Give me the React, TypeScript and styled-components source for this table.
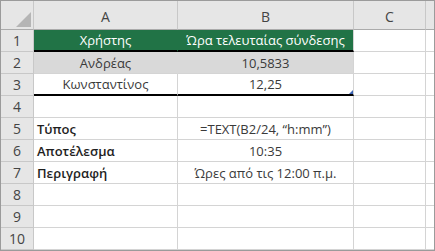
import React from "react";
import styled, { createGlobalStyle } from "styled-components";

const GlobalStyle = createGlobalStyle`
  html, body {
    margin: 0;
    padding: 0;
    background: #ffffff;
  }
`;

const Sheet = styled.div`
  width: 435px;
  height: 251px;
  box-sizing: border-box;
  border: 1px solid #9b9b9b;
  display: grid;
  grid-template-columns: 33px 144px 176px 72px 8px;
  grid-template-rows: 29px repeat(10, 22px);
  font-family: "Open Sans", "Noto Sans", sans-serif;
  font-size: 13px;
  color: #3a3a3a;
  background: #ffffff;
  overflow: hidden;
`;

const Corner = styled.div`
  position: relative;
  background: #e6e6e6;
  border-right: 1px solid #c8c8c8;
  border-bottom: 1px solid #ababab;
  box-sizing: border-box;
`;

const CornerTriangle = styled.div`
  position: absolute;
  right: 2px;
  bottom: 2px;
  width: 0;
  height: 0;
  border-left: 15px solid transparent;
  border-bottom: 15px solid #b5b5b5;
`;

const ColHead = styled.div<{ $last?: boolean }>`
  background: #e6e6e6;
  box-sizing: border-box;
  border-right: ${(p) => (p.$last ? "none" : "1px solid #c8c8c8")};
  border-bottom: 1px solid #ababab;
  display: flex;
  align-items: center;
  justify-content: center;
  padding-top: 3px;
  font-size: 14px;
  color: #444444;
`;

const RowHead = styled.div`
  background: #e6e6e6;
  box-sizing: border-box;
  border-right: 1px solid #c8c8c8;
  border-bottom: 1px solid #c8c8c8;
  display: flex;
  align-items: center;
  justify-content: center;
  font-size: 14px;
  color: #444444;
`;

type Tone = "plain" | "title" | "band";

const Cell = styled.div<{
  $tone?: Tone;
  $align?: "left" | "center";
  $bold?: boolean;
  $thick?: boolean;
  $joined?: boolean;
  $last?: boolean;
}>`
  position: relative;
  box-sizing: border-box;
  display: flex;
  align-items: center;
  justify-content: ${(p) => (p.$align === "left" ? "flex-start" : "center")};
  padding: 0 3px;
  white-space: nowrap;
  background: ${(p) =>
    p.$tone === "title" ? "#217346" : p.$tone === "band" ? "#d9d9d9" : "#ffffff"};
  color: ${(p) => (p.$tone === "title" ? "#ffffff" : p.$bold ? "#1e1e1e" : "#3a3a3a")};
  font-weight: ${(p) => (p.$bold ? 600 : 400)};
  border-right: ${(p) =>
    p.$last
      ? "none"
      : p.$joined
      ? `1px solid ${p.$tone === "title" ? "#217346" : "#d9d9d9"}`
      : "1px solid #d4d4d4"};
  border-bottom: ${(p) => (p.$thick ? "2px solid #000000" : "1px solid #d4d4d4")};
`;

const Handle = styled.div`
  position: absolute;
  right: 0;
  bottom: 0;
  width: 0;
  height: 0;
  border-left: 4px solid transparent;
  border-bottom: 4px solid #3a63b4;
`;

type RowData = {
  a?: string;
  b?: string;
  tone?: Tone;
  label?: boolean;
  thick?: boolean;
};

const rows: RowData[] = [
  { a: "Χρήστης", b: "Ώρα τελευταίας σύνδεσης", tone: "title", thick: true },
  { a: "Ανδρέας", b: "10,5833", tone: "band" },
  { a: "Κωνσταντίνος", b: "12,25", thick: true },
  {},
  { a: "Τύπος", b: "=TEXT(B2/24, “h:mm”)", label: true },
  { a: "Αποτέλεσμα", b: "10:35", label: true },
  { a: "Περιγραφή", b: "Ώρες από τις 12:00 π.μ.", label: true },
  {},
  {},
  {},
];

export default function App() {
  return (
    <>
      <GlobalStyle />
      <Sheet>
        <Corner>
          <CornerTriangle />
        </Corner>
        <ColHead>A</ColHead>
        <ColHead>B</ColHead>
        <ColHead>C</ColHead>
        <ColHead $last />
        {rows.map((r, i) => {
          const tone = r.tone ?? "plain";
          const joined = tone !== "plain";
          return (
            <React.Fragment key={i}>
              <RowHead>{i + 1}</RowHead>
              <Cell
                $tone={tone}
                $align={r.label ? "left" : "center"}
                $bold={r.label}
                $thick={r.thick}
                $joined={joined}
              >
                {r.a}
              </Cell>
              <Cell $tone={tone} $thick={r.thick}>
                {r.b}
                {i === 2 && <Handle />}
              </Cell>
              <Cell />
              <Cell $last />
            </React.Fragment>
          );
        })}
      </Sheet>
    </>
  );
}
